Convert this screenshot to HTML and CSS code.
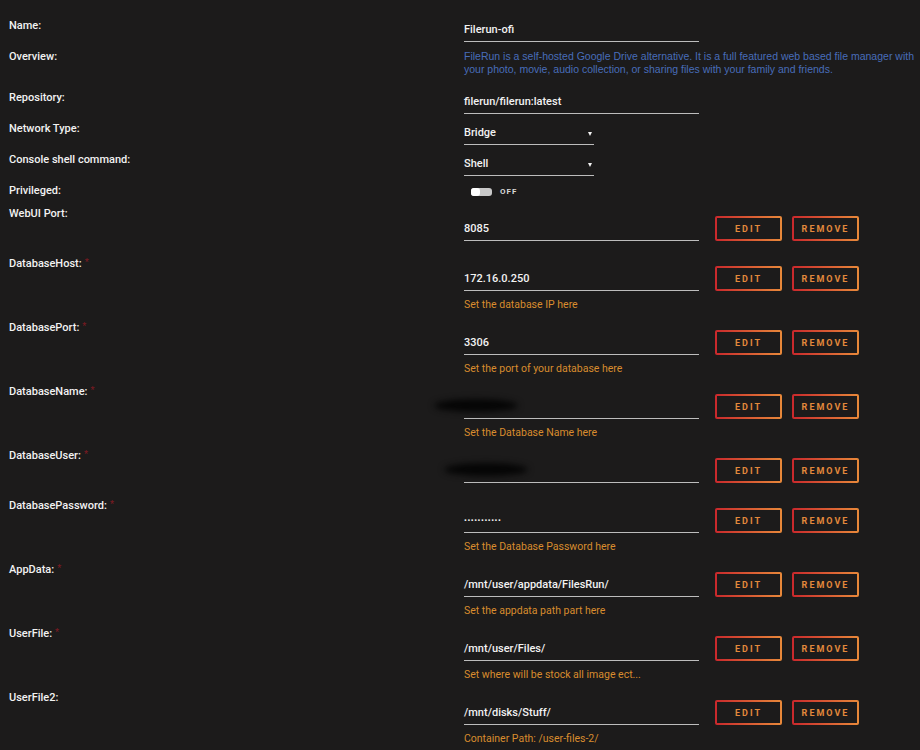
FILE: index.html
```html
<!DOCTYPE html>
<html>
<head>
  <title>Docker Template</title>
  <link rel="stylesheet" href="styles.css">
</head>
<body>
  <div class="form">
    <div class="row">
      <div class="label">Name:</div>
      <div class="field"><div class="input">Filerun-ofi</div></div>
    </div>
    <div class="row">
      <div class="label">Overview:</div>
      <div class="field"><div class="overview">FileRun is a self-hosted Google Drive alternative. It is a full featured web based file manager with<br>your photo, movie, audio collection, or sharing files with your family and friends.</div></div>
    </div>
    <div class="row">
      <div class="label">Repository:</div>
      <div class="field"><div class="input">filerun/filerun:latest</div></div>
    </div>
    <div class="row">
      <div class="label">Network Type:</div>
      <div class="field"><div class="input select">Bridge</div></div>
    </div>
    <div class="row">
      <div class="label">Console shell command:</div>
      <div class="field"><div class="input select">Shell</div></div>
    </div>
    <div class="row">
      <div class="label">Privileged:</div>
      <div class="field"><div class="switch"><span class="toggle"><span class="knob"></span></span>OFF</div></div>
    </div>

    <div class="row config">
      <div class="label">WebUI Port:</div>
      <div class="field">
        <div class="control"><div class="input">8085</div><span class="btn">EDIT</span><span class="btn">REMOVE</span></div>
      </div>
    </div>
    <div class="row config">
      <div class="label">DatabaseHost:<span class="req">*</span></div>
      <div class="field">
        <div class="control"><div class="input">172.16.0.250</div><span class="btn">EDIT</span><span class="btn">REMOVE</span></div>
        <div class="help">Set the database IP here</div>
      </div>
    </div>
    <div class="row config">
      <div class="label">DatabasePort:<span class="req">*</span></div>
      <div class="field">
        <div class="control"><div class="input">3306</div><span class="btn">EDIT</span><span class="btn">REMOVE</span></div>
        <div class="help">Set the port of your database here</div>
      </div>
    </div>
    <div class="row config">
      <div class="label">DatabaseName:<span class="req">*</span></div>
      <div class="field">
        <div class="control"><div class="input"><span class="redact"></span></div><span class="btn">EDIT</span><span class="btn">REMOVE</span></div>
        <div class="help">Set the Database Name here</div>
      </div>
    </div>
    <div class="row config">
      <div class="label">DatabaseUser:<span class="req">*</span></div>
      <div class="field">
        <div class="control"><div class="input"><span class="redact shift"></span></div><span class="btn">EDIT</span><span class="btn">REMOVE</span></div>
      </div>
    </div>
    <div class="row config">
      <div class="label">DatabasePassword:<span class="req">*</span></div>
      <div class="field">
        <div class="control"><div class="input dots">&bull;&bull;&bull;&bull;&bull;&bull;&bull;&bull;&bull;&bull;&bull;</div><span class="btn">EDIT</span><span class="btn">REMOVE</span></div>
        <div class="help">Set the Database Password here</div>
      </div>
    </div>
    <div class="row config">
      <div class="label">AppData:<span class="req">*</span></div>
      <div class="field">
        <div class="control"><div class="input">/mnt/user/appdata/FilesRun/</div><span class="btn">EDIT</span><span class="btn">REMOVE</span></div>
        <div class="help">Set the appdata path part here</div>
      </div>
    </div>
    <div class="row config">
      <div class="label">UserFile:<span class="req">*</span></div>
      <div class="field">
        <div class="control"><div class="input">/mnt/user/Files/</div><span class="btn">EDIT</span><span class="btn">REMOVE</span></div>
        <div class="help">Set where will be stock all image ect...</div>
      </div>
    </div>
    <div class="row config">
      <div class="label">UserFile2:</div>
      <div class="field">
        <div class="control"><div class="input">/mnt/disks/Stuff/</div><span class="btn">EDIT</span><span class="btn">REMOVE</span></div>
        <div class="help">Container Path: /user-files-2/</div>
      </div>
    </div>
  </div>
</body>
</html>
```

FILE: styles.css
```css
body {
  margin: 0;
  background-color: #1c1b1b;
  color: #f2f2f2;
  font-family: Roboto, "Open Sans", sans-serif;
  font-size: 11px;
  overflow: hidden;
}
.form {
  padding-top: 19px;
}
.row {
  display: grid;
  grid-template-columns: 464px 1fr;
  padding-bottom: 8px;
}
.label {
  padding-left: 9px;
  line-height: 14px;
  font-weight: 500;
  color: #f2f2f2;
}
.req {
  margin-left: 3px;
  color: #7a1a22;
  font-size: 9px;
  vertical-align: top;
  line-height: 10px;
}
.input {
  position: relative;
  width: 235px;
  box-sizing: border-box;
  padding: 4px 0 4px 0;
  line-height: 14px;
  height: 23px;
  border-bottom: 1px solid #bdbdbd;
  font-weight: 500;
  color: #f2f2f2;
}
.select {
  width: 130px;
}
.select::after {
  content: "";
  position: absolute;
  right: 2px;
  top: 10px;
  border-left: 2px solid transparent;
  border-right: 2px solid transparent;
  border-top: 4px solid #f2f2f2;
}
.overview {
  color: #486dba;
  line-height: 13px;
  font-family: "Liberation Sans", Arial, sans-serif;
  font-size: 10.5px;
  white-space: nowrap;
  padding-bottom: 7px;
}
.switch {
  display: flex;
  align-items: center;
  gap: 8px;
  height: 15px;
  padding-left: 7px;
  font-size: 8px;
  font-weight: 700;
  letter-spacing: 1px;
  color: #d8d8d8;
}
.toggle {
  width: 21px;
  height: 8px;
  border-radius: 3px;
  background-color: #c8c8c8;
  display: flex;
}
.knob {
  width: 9px;
  height: 8px;
  border-radius: 3px;
  background-color: #ffffff;
}
.config {
  padding-bottom: 9px;
}
.config .field {
  padding-top: 9px;
}
.control {
  display: flex;
  align-items: flex-start;
  height: 25px;
  margin-bottom: 7px;
}
.control .input {
  height: 25px;
  padding-top: 6px;
}
.dots {
  font-size: 8px;
  letter-spacing: 0.6px;
}
.redact {
  position: absolute;
  left: -30px;
  top: 5px;
  width: 84px;
  height: 13px;
  border-radius: 50%;
  background-color: #050505;
  filter: blur(3px);
}
.redact.shift {
  left: -20px;
}
.btn {
  display: flex;
  align-items: center;
  justify-content: center;
  width: 67px;
  height: 25px;
  box-sizing: border-box;
  margin-left: 16px;
  border: 2px solid transparent;
  border-radius: 2px;
  background: linear-gradient(#1c1b1b, #1c1b1b) padding-box,
    linear-gradient(90deg, #c9282c, #e8893a) border-box;
  color: #e3893c;
  font-size: 9px;
  font-weight: 700;
  letter-spacing: 2px;
}
.btn + .btn {
  margin-left: 10px;
}
.help {
  line-height: 14px;
  color: #d88c2e;
  font-size: 10.5px;
}
```
